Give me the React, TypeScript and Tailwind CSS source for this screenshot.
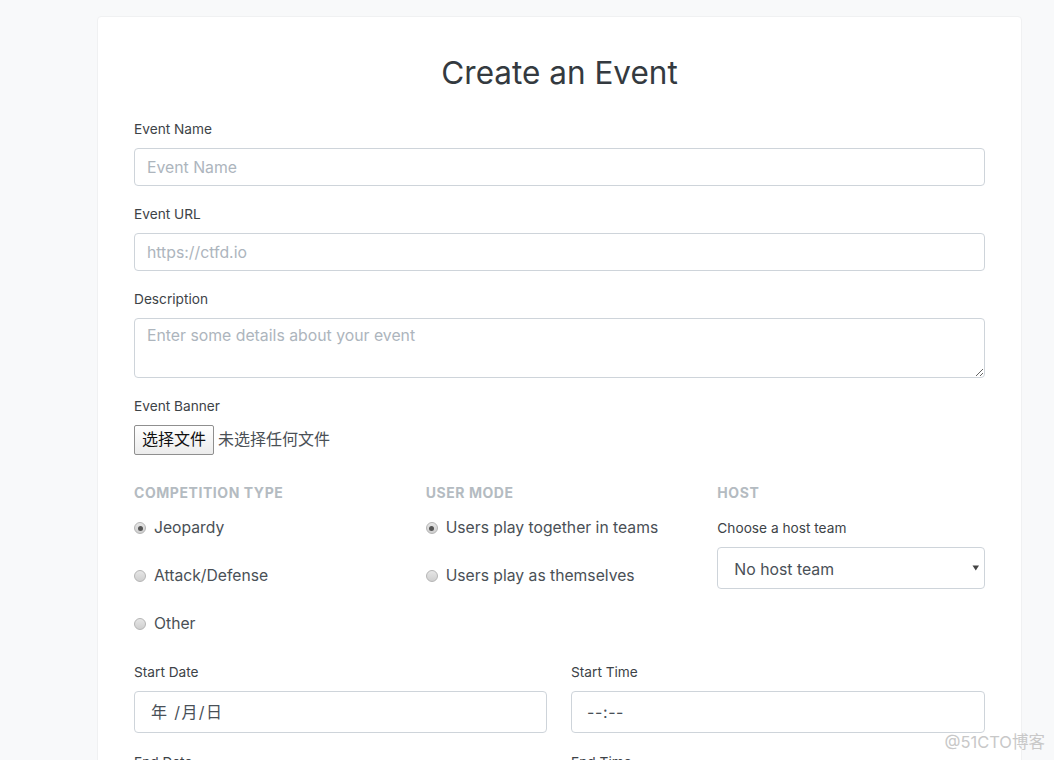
import React from 'react';

const font = "font-['Inter','Noto_Sans_CJK_SC',sans-serif]";

const Label = ({ children, tight = false }: { children: React.ReactNode; tight?: boolean }) => (
  <label className={`block h-[21px] text-[13.7px] ${tight ? 'mb-2 leading-[21px]' : 'mb-[9px] leading-[23px]'} text-[#3d4347]`}>{children}</label>
);

const TextField = ({ placeholder }: { placeholder: string }) => (
  <input
    placeholder={placeholder}
    className="block w-full h-[38px] mb-[17px] px-3 rounded border border-[#ced4da] bg-white text-[15.8px] outline-none placeholder:text-[#adb5bd]"
  />
);

const SectionHead = ({ children }: { children: React.ReactNode }) => (
  <h3 className="h-6 mb-[11px] text-sm font-bold leading-6 tracking-[0.04em] text-[#b4bbc1]">{children}</h3>
);

const Radio = ({ label, checked = false }: { label: string; checked?: boolean }) => (
  <div className="flex items-center gap-[8px] h-6 mb-6 text-[15.7px] text-[#4a5056]">
    <span className="flex items-center justify-center w-3 h-3 rounded-full border border-[#b5b5b5] bg-gradient-to-b from-[#e6e6e6] to-[#cfcfcf]">
      {checked && <span className="w-[5px] h-[5px] rounded-full bg-[#555555]" />}
    </span>
    {label}
  </div>
);

export default function App() {
  return (
    <div className={`relative h-[760px] overflow-hidden bg-[#f8f9fa] ${font}`}>
      <div className="ml-[97px] mt-4 w-[925px] h-[900px] px-[36px] rounded border border-[#f0f1f2] bg-white">
        <h1 className="pt-[34px] mb-[34px] h-[67px] text-center text-[31.5px] leading-[44px] text-[#343a40]">Create an Event</h1>

        <form>
          <Label>Event Name</Label>
          <TextField placeholder="Event Name" />

          <Label>Event URL</Label>
          <TextField placeholder="https://ctfd.io" />

          <Label>Description</Label>
          <textarea
            placeholder="Enter some details about your event"
            className="block w-full h-[60px] mb-[17px] px-3 py-[5px] rounded border border-[#ced4da] bg-white text-[15.8px] outline-none placeholder:text-[#adb5bd]"
          />

          <Label>Event Banner</Label>
          <div className="flex items-center gap-[4px] h-[30px] mb-[26px]">
            <button type="button" className="w-20 h-[30px] pb-[2px] border border-[#8f8f8f] rounded-[2px] bg-gradient-to-b from-white to-[#ececec] text-base text-[#111111]">
              选择文件
            </button>
            <span className="pb-[2px] text-base text-[#4a5056]">未选择任何文件</span>
          </div>

          <div className="grid grid-cols-3 gap-x-6 h-[181px]">
            <div>
              <SectionHead>COMPETITION TYPE</SectionHead>
              <Radio label="Jeopardy" checked />
              <Radio label="Attack/Defense" />
              <Radio label="Other" />
            </div>
            <div>
              <SectionHead>USER MODE</SectionHead>
              <Radio label="Users play together in teams" checked />
              <Radio label="Users play as themselves" />
            </div>
            <div>
              <SectionHead>HOST</SectionHead>
              <div className="h-[23px] pt-[2px] mb-2 text-[13.7px] leading-[21px] text-[#3d4347]">Choose a host team</div>
              <div className="flex items-center justify-between h-[42px] pl-[16px] pr-1 rounded border border-[#ced4da] bg-white text-[15.8px] text-[#495057]">
                <span className="pt-[4px]">No host team</span>
                <svg width="8" height="6" viewBox="0 0 8 6">
                  <path d="M0.5 0.5h6.5L3.8 5.5z" fill="#444444" />
                </svg>
              </div>
            </div>
          </div>

          <div className="grid grid-cols-[413px_414px] gap-x-6">
            <div>
              <Label tight>Start Date</Label>
              <div className="flex items-center h-[42px] px-4 rounded border border-[#ced4da] bg-white text-base tracking-[1.4px] text-[#495057]">
                年 /月/日
              </div>
            </div>
            <div>
              <Label tight>Start Time</Label>
              <div className="flex items-center h-[42px] px-[15px] rounded border border-[#ced4da] bg-white text-base tracking-[0.6px] text-[#495057]">
                --:--
              </div>
            </div>
            <div className="mt-[18px]">
              <Label>End Date</Label>
            </div>
            <div className="mt-[18px]">
              <Label>End Time</Label>
            </div>
          </div>
        </form>
      </div>

      <div className="absolute right-[9px] bottom-[8px] text-[16.5px] leading-5 text-[#c8c8c8]">@51CTO博客</div>
    </div>
  );
}
